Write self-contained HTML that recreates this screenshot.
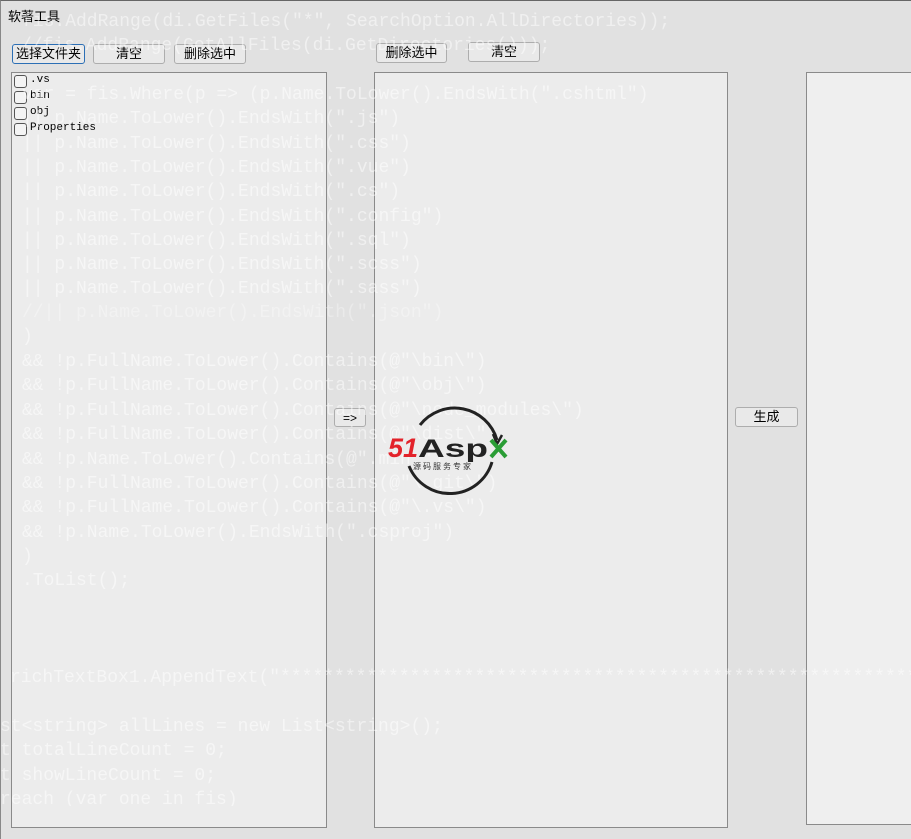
<!DOCTYPE html>
<html><head><meta charset="utf-8"><style>
*{margin:0;padding:0;box-sizing:border-box}
html,body{width:911px;height:839px;overflow:hidden}
body{background:#e1e1e1;position:relative;font-family:"Liberation Sans","Noto Sans CJK SC",sans-serif}
.p{position:absolute;background:#ececec;border:1px solid #8a8a8a}
.b{position:absolute;height:20px;border:1px solid #adadad;border-radius:3px;background:#e9e9e9;font-size:13px;text-align:center;line-height:18px;color:#000}
.code{position:absolute;left:0;top:0;width:911px;height:839px;overflow:hidden;font-family:"Liberation Mono",monospace;font-size:18px;color:rgba(255,255,255,.5);white-space:pre;line-height:24.3px}
.code div{position:absolute;white-space:pre}
.cb{position:absolute;left:14px;width:13px;height:13px;border:1px solid #555;border-radius:3px;background:#f4f4f4}
.ct{position:absolute;left:30px;font-family:"Liberation Mono",monospace;font-size:11px;color:#000}
</style></head><body>
<div style="position:absolute;left:0;top:0;width:911px;height:839px;border-top:1px solid #666;border-left:1px solid #888"></div>
<div style="position:absolute;left:8px;top:6px;font-size:13px">软著工具</div>
<div class="b" style="left:12px;top:44px;width:73px;border-color:#2c6fb5">选择文件夹</div>
<div class="b" style="left:93px;top:44px;width:72px">清空</div>
<div class="b" style="left:174px;top:44px;width:72px">删除选中</div>
<div class="b" style="left:376px;top:43px;width:71px">删除选中</div>
<div class="b" style="left:468px;top:42px;width:72px">清空</div>
<div class="p" style="left:11px;top:72px;width:316px;height:756px"></div>
<div class="p" style="left:374px;top:72px;width:354px;height:756px"></div>
<div class="p" style="left:806px;top:72px;width:110px;height:753px;background:#efefef"></div>
<div class="cb" style="top:75px"></div><div class="ct" style="top:74px">.vs</div>
<div class="cb" style="top:91px"></div><div class="ct" style="top:90px">bin</div>
<div class="cb" style="top:107px"></div><div class="ct" style="top:106px">obj</div>
<div class="cb" style="top:123px"></div><div class="ct" style="top:122px">Properties</div>
<div class="b" style="left:334px;top:408px;width:32px;height:19px;font-size:12px">=&gt;</div>
<div class="b" style="left:735px;top:407px;width:63px">生成</div>
<div class="code">
<div style="left:22px;top:10px">fis.AddRange(di.GetFiles("*", SearchOption.AllDirectories));</div>
<div style="left:21px;top:34px">//fis.AddRange(GetAllFiles(di.GetDirectories()));</div>
<div style="left:22px;top:83px">var = fis.Where(p => (p.Name.ToLower().EndsWith(".cshtml")</div>
<div style="left:22px;top:107px">|| p.Name.ToLower().EndsWith(".js")</div>
<div style="left:22px;top:132px">|| p.Name.ToLower().EndsWith(".css")</div>
<div style="left:22px;top:156px">|| p.Name.ToLower().EndsWith(".vue")</div>
<div style="left:22px;top:180px">|| p.Name.ToLower().EndsWith(".cs")</div>
<div style="left:22px;top:205px">|| p.Name.ToLower().EndsWith(".config")</div>
<div style="left:22px;top:229px">|| p.Name.ToLower().EndsWith(".sql")</div>
<div style="left:22px;top:253px">|| p.Name.ToLower().EndsWith(".scss")</div>
<div style="left:22px;top:277px">|| p.Name.ToLower().EndsWith(".sass")</div>
<div style="left:22px;top:301px;opacity:.6">//|| p.Name.ToLower().EndsWith(".json")</div>
<div style="left:22px;top:325px">)</div>
<div style="left:22px;top:350px">&amp;&amp; !p.FullName.ToLower().Contains(@"\bin\")</div>
<div style="left:22px;top:374px">&amp;&amp; !p.FullName.ToLower().Contains(@"\obj\")</div>
<div style="left:22px;top:399px">&amp;&amp; !p.FullName.ToLower().Contains(@"\node_modules\")</div>
<div style="left:22px;top:423px">&amp;&amp; !p.FullName.ToLower().Contains(@"\dist\")</div>
<div style="left:22px;top:448px">&amp;&amp; !p.Name.ToLower().Contains(@".min.")</div>
<div style="left:22px;top:472px">&amp;&amp; !p.FullName.ToLower().Contains(@"\.git\")</div>
<div style="left:22px;top:496px">&amp;&amp; !p.FullName.ToLower().Contains(@"\.vs\")</div>
<div style="left:22px;top:521px">&amp;&amp; !p.Name.ToLower().EndsWith(".csproj")</div>
<div style="left:22px;top:545px">)</div>
<div style="left:22px;top:569px">.ToList();</div>
<div style="left:10px;top:666px">richTextBox1.AppendText("*********************************************************************</div>
<div style="left:0px;top:715px">st&lt;string&gt; allLines = new List&lt;string&gt;();</div>
<div style="left:0px;top:739px">t totalLineCount = 0;</div>
<div style="left:0px;top:764px">t showLineCount = 0;</div>
<div style="left:0px;top:788px;height:18px;overflow:hidden">reach (var one in fis)</div>
</div>
<svg style="position:absolute;left:385px;top:400px" width="130" height="95" viewBox="0 0 130 95">
<path d="M35 25 A44 44 0 0 1 112 40" fill="none" stroke="#222" stroke-width="3"/>
<path d="M107 62 A44 44 0 0 1 24 66" fill="none" stroke="#222" stroke-width="3"/>
<path d="M108 34 l4 10 l5 -9" fill="none" stroke="#222" stroke-width="2.5"/>
<text x="3" y="57" font-family="Liberation Sans,sans-serif" font-weight="bold" font-style="italic" font-size="27" fill="#e3222a">51</text>
<text x="33" y="57" font-family="Liberation Sans,sans-serif" font-weight="bold" font-size="25" fill="#222" textLength="70" lengthAdjust="spacingAndGlyphs">Asp</text>
<path d="M106 40 l15 17 M121 40 l-15 17" stroke="#2a9d35" stroke-width="4"/>
<text x="28" y="69" font-family="Noto Sans CJK SC,sans-serif" font-size="8" fill="#333" letter-spacing="2">源码服务专家</text>
</svg>
</body></html>
